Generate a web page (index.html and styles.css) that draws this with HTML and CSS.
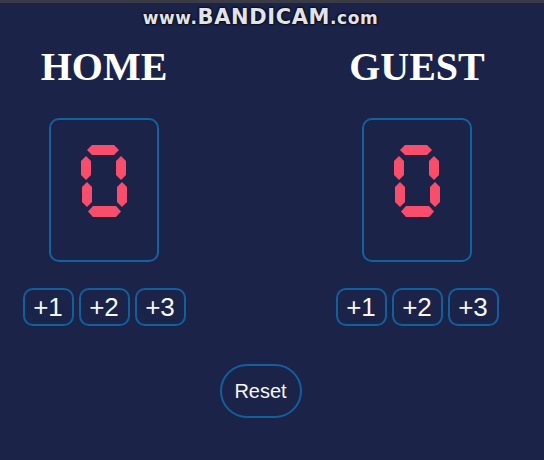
FILE: index.html
```html
<!DOCTYPE html>
<html lang="en">
<head>
<meta charset="utf-8">
<title>Scoreboard</title>
<link rel="stylesheet" href="styles.css">
</head>
<body>
<div class="window-edge"></div>
<div class="page">
  <div class="watermark"><span class="wm-small">www.</span><span class="wm-big">BANDICAM</span><span class="wm-small">.com</span></div>
  <main class="board">
    <section class="team">
      <h2 class="team-name">HOME</h2>
      <div class="score-box" role="img" aria-label="0">
        <div class="digit">
          <span class="seg seg-a"></span>
          <span class="seg seg-b"></span>
          <span class="seg seg-c"></span>
          <span class="seg seg-d"></span>
          <span class="seg seg-e"></span>
          <span class="seg seg-f"></span>
        </div>
      </div>
      <div class="btn-row">
        <button class="btn">+1</button>
        <button class="btn">+2</button>
        <button class="btn">+3</button>
      </div>
    </section>
    <section class="team">
      <h2 class="team-name">GUEST</h2>
      <div class="score-box" role="img" aria-label="0">
        <div class="digit">
          <span class="seg seg-a"></span>
          <span class="seg seg-b"></span>
          <span class="seg seg-c"></span>
          <span class="seg seg-d"></span>
          <span class="seg seg-e"></span>
          <span class="seg seg-f"></span>
        </div>
      </div>
      <div class="btn-row">
        <button class="btn">+1</button>
        <button class="btn">+2</button>
        <button class="btn">+3</button>
      </div>
    </section>
  </main>
  <div class="reset-row">
    <button class="reset">Reset</button>
  </div>
</div>
</body>
</html>
```
FILE: styles.css
```css
* { box-sizing: border-box; }

html, body {
  margin: 0;
  height: 100%;
}

body {
  background: #1b2349;
  color: #f4f4f4;
  font-family: "Liberation Sans", Arial, sans-serif;
  overflow: hidden;
}

.window-edge {
  height: 3px;
  background: #3a3b44;
}

.page {
  width: 521px;
}

.watermark {
  height: 28px;
  line-height: 28px;
  text-align: center;
  font-family: "DejaVu Sans", sans-serif;
  font-weight: bold;
  color: #e2e3ea;
  text-shadow: 0 0 2px #05060c, 0 0 3px #05060c, 0 0 1px #000;
  white-space: nowrap;
  letter-spacing: 0.6px;
}

.wm-big {
  font-size: 21px;
}

.wm-small {
  font-size: 17px;
}

.board {
  display: grid;
  grid-template-columns: 208px 208px;
  column-gap: 105px;
  margin-top: 13px;
}

.team {
  display: flex;
  flex-direction: column;
  align-items: center;
}

.team-name {
  margin: 0;
  font-family: "Liberation Serif", "Times New Roman", serif;
  font-weight: bold;
  font-size: 40px;
  line-height: 46px;
  color: #ffffff;
}

.score-box {
  margin-top: 28px;
  width: 110px;
  height: 144px;
  border: 2px solid #1262a0;
  border-radius: 10px;
  display: flex;
  justify-content: center;
  padding-top: 25px;
}

.digit {
  position: relative;
  width: 48px;
  height: 72px;
}

.seg {
  position: absolute;
  background: #f94e6b;
}

.seg-a, .seg-d {
  height: 10px;
  clip-path: polygon(0 50%, 5px 0, calc(100% - 5px) 0, 100% 50%, calc(100% - 5px) 100%, 5px 100%);
}

.seg-b, .seg-c, .seg-e, .seg-f {
  width: 10px;
  clip-path: polygon(50% 0, 100% 5px, 100% calc(100% - 5px), 50% 100%, 0 calc(100% - 5px), 0 5px);
}

.seg-a { left: 7px; top: 0; width: 32px; }
.seg-b { left: 36px; top: 11px; height: 24px; }
.seg-c { left: 37px; top: 37px; height: 25px; }
.seg-d { left: 8px; top: 61px; width: 33px; height: 11px; }
.seg-e { left: 2px; top: 37px; height: 25px; }
.seg-f { left: 1px; top: 11px; height: 24px; }

.btn-row {
  display: flex;
  gap: 5px;
  margin-top: 26px;
}

.btn {
  height: 38px;
  min-width: 51px;
  padding: 0 8px;
  border: 2px solid #11609d;
  border-radius: 10px;
  background: transparent;
  color: #f6f6f6;
  font-family: "Liberation Sans", Arial, sans-serif;
  font-size: 26px;
  line-height: 32px;
}

.reset-row {
  display: flex;
  justify-content: center;
  margin-top: 38px;
}

.reset {
  height: 54px;
  width: 82px;
  padding: 0;
  border: 2px solid #11609d;
  border-radius: 27px;
  background: transparent;
  color: #f6f6f6;
  font-family: "Liberation Sans", Arial, sans-serif;
  font-size: 20px;
}
```
